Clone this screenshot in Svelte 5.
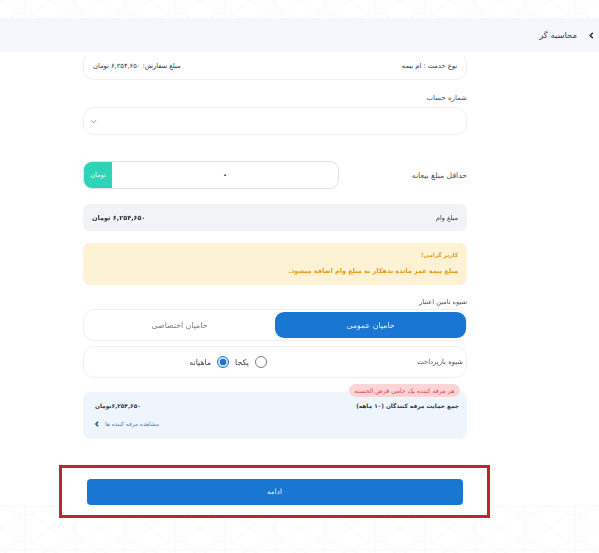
<script>
  const tabs = ['حامیان عمومی', 'حامیان اختصاصی'];
  let active = $state(0);
  let plan = $state('monthly');
</script>

<div class="page" dir="rtl">
  <svg class="pattern" aria-hidden="true" width="100%" height="100%">
    <defs>
      <pattern id="tile" width="50" height="44" patternUnits="userSpaceOnUse">
        <path d="M25 0l7 14 18 8-18 8-7 14-7-14-18-8 18-8zM18 14h14M18 30h14M25 0v44M0 22h50M0 0l18 14M50 0 32 14M0 44l18-14M50 44 32 30" fill="none" stroke="#f8f8fa" stroke-width="1"/>
      </pattern>
    </defs>
    <rect width="100%" height="100%" fill="url(#tile)"/>
  </svg>

  <header class="topbar">
    <svg class="back" viewBox="0 0 8 8" width="7" height="7"><path d="M5.5 1 2.5 4l3 3" fill="none" stroke="#2a3140" stroke-width="1.7"/></svg>
    <span>محاسبه گر</span>
  </header>

  <main class="sheet">
    <section class="column">
      <div class="card summary">
        <span>نوع خدمت : ام بیمه</span>
        <span>مبلغ سفارش: ۶,۲۵۴,۶۵۰ تومان</span>
      </div>

      <label class="label account-label" for="account">شماره حساب</label>
      <div class="card select" id="account">
        <svg viewBox="0 0 8 6" width="7" height="5"><path d="M1 1.5 4 4.5l3-3" fill="none" stroke="#7b8494" stroke-width="1"/></svg>
      </div>

      <div class="deposit">
        <span class="deposit-label">حداقل مبلغ بیعانه</span>
        <div class="amount">
          <span class="amount-value">۰</span>
          <span class="addon">تومان</span>
        </div>
      </div>

      <div class="loan">
        <span>مبلغ وام</span>
        <strong>۶,۲۵۴,۶۵۰ تومان</strong>
      </div>

      <div class="alert">
        <p class="alert-title">کاربر گرامی!</p>
        <p>مبلغ بیمه عمر مانده بدهکار به مبلغ وام اضافه میشود.</p>
      </div>

      <div class="label tabs-label">شیوه تامین اعتبار</div>
      <div class="tabs">
        {#each tabs as tab, i}
          <button class="tab" class:on={active === i} onclick={() => (active = i)}>{tab}</button>
        {/each}
      </div>

      <div class="card repay">
        <span class="repay-label">شیوه بازپرداخت</span>
        <div class="radios">
          <button class="radio" onclick={() => (plan = 'once')}>
            <span class="dot" class:checked={plan === 'once'}></span>
            <span>یکجا</span>
          </button>
          <button class="radio" onclick={() => (plan = 'monthly')}>
            <span class="dot" class:checked={plan === 'monthly'}></span>
            <span>ماهیانه</span>
          </button>
        </div>
      </div>

      <div class="support">
        <span class="pill">هر مرفه کننده یک حامی قرض الحسنه</span>
        <div class="support-row">
          <strong>جمع حمایت مرفه کنندگان (۱۰ ماهه)</strong>
          <strong>۶,۲۵۴,۶۵۰تومان</strong>
        </div>
        <a class="more" href="#more">
          <span>مشاهده مرفه کننده ها</span>
          <svg viewBox="0 0 8 8" width="6" height="6"><path d="M5.5 1 2.5 4l3 3" fill="none" stroke="#1b4f8a" stroke-width="2"/></svg>
        </a>
      </div>
    </section>

    <div class="cta-frame">
      <button class="cta">ادامه</button>
    </div>
  </main>
</div>

<style>
  :global(body) {
    margin: 0;
    background: #fff;
  }
  .page {
    position: relative;
    width: 599px;
    height: 553px;
    overflow: hidden;
    font-family: "DejaVu Sans", "Noto Sans", sans-serif;
    color: #2f3542;
    font-size: 6.5px;
    filter: blur(0.4px);
    opacity: 0.999;
    will-change: opacity;
  }
  .pattern {
    position: absolute;
    inset: 0;
  }
  .topbar {
    position: relative;
    margin-top: 18px;
    height: 34px;
    box-sizing: border-box;
    background: #f5f7fd;
    display: flex;
    align-items: center;
    gap: 11px;
    padding-right: 4px;
    font-size: 8.4px;
    color: #39404e;
  }
  .sheet {
    position: relative;
    height: 453px;
    background: #fff;
    display: flex;
    flex-direction: column;
    align-items: flex-start;
  }
  .column {
    flex-shrink: 0;
    width: 384px;
    display: flex;
    flex-direction: column;
    margin-right: 132px;
  }
  .card {
    box-sizing: border-box;
    border: 1px solid #f0f1f4;
    border-radius: 11px;
    background: #fff;
    display: flex;
    align-items: center;
    justify-content: space-between;
  }
  .summary {
    height: 28px;
    padding: 0 9px;
    font-size: 6.7px;
    border-top-color: transparent;
  }
  .label {
    font-size: 7px;
    color: #4a5160;
  }
  .account-label {
    margin-top: 13px;
    height: 14px;
    line-height: 11px;
  }
  .select {
    height: 28px;
    justify-content: flex-end;
    padding-left: 6px;
  }
  .deposit {
    margin-top: 26px;
    height: 28px;
    display: flex;
    align-items: center;
    justify-content: space-between;
  }
  .deposit-label {
    font-size: 7.7px;
    color: #4a5160;
  }
  .amount {
    width: 256px;
    height: 28px;
    box-sizing: border-box;
    border: 1px solid #e0e2e8;
    border-radius: 9px;
    display: flex;
    overflow: hidden;
    background: #fff;
  }
  .amount-value {
    flex: 1;
    text-align: center;
    line-height: 26px;
    font-size: 9px;
    font-weight: 700;
  }
  .addon {
    width: 28px;
    background: #2fd3b5;
    color: #e8fbf6;
    font-size: 6.5px;
    text-align: center;
    line-height: 26px;
  }
  .loan {
    margin-top: 15px;
    height: 27px;
    background: #f1f3f7;
    border-radius: 7px;
    display: flex;
    align-items: center;
    justify-content: space-between;
    padding: 0 9px;
    font-size: 6.5px;
  }
  .alert {
    margin-top: 12px;
    height: 42px;
    box-sizing: border-box;
    background: #fdf3d4;
    border-radius: 7px;
    padding: 4px 9px 0;
    color: #e8960f;
    font-size: 6.45px;
    font-weight: 700;
  }
  .alert p {
    margin: 0;
    line-height: 16px;
  }
  .alert-title {
    font-size: 5.7px;
  }
  .tabs-label {
    margin-top: 11px;
    height: 13px;
    line-height: 13px;
    font-size: 6.6px;
  }
  .tabs {
    box-sizing: border-box;
    height: 32px;
    border: 1px solid #eceef2;
    border-radius: 11px;
    display: flex;
    padding: 2px 0;
    background: #fff;
  }
  .tab {
    flex: 1;
    border: 0;
    background: none;
    font: inherit;
    font-size: 7.8px;
    color: #777e8b;
    border-radius: 9px;
    padding: 0;
  }
  .tab.on {
    background: #1976d2;
    color: #e8f2fb;
  }
  .repay {
    margin-top: 5px;
    height: 32px;
    padding: 0 3px;
    justify-content: flex-start;
  }
  .repay-label {
    width: 196px;
    font-size: 6.8px;
    color: #4a5160;
  }
  .radios {
    display: flex;
    gap: 6px;
  }
  .radio {
    border: 0;
    background: none;
    padding: 0;
    font: inherit;
    color: #3a4150;
    font-size: 7.8px;
    display: flex;
    align-items: center;
    gap: 6px;
  }
  .dot {
    box-sizing: border-box;
    width: 12px;
    height: 12px;
    border-radius: 50%;
    border: 1px solid #777d88;
    background: #fff;
  }
  .dot.checked {
    border-color: #1976d2;
    background: radial-gradient(circle, #1976d2 0 3px, #cfe2f5 3.6px);
  }
  .support {
    position: relative;
    margin-top: 14px;
    height: 47px;
    box-sizing: border-box;
    background: #eef5fd;
    border-radius: 7px;
    padding: 8px 8px 0 9px;
  }
  .pill {
    position: absolute;
    top: -8px;
    right: 7px;
    width: 111px;
    height: 13px;
    border-radius: 7px;
    background: #fbd5d5;
    color: #e0484d;
    font-size: 6.3px;
    line-height: 13px;
    text-align: center;
    white-space: nowrap;
  }
  .support-row {
    display: flex;
    justify-content: space-between;
    padding-left: 3px;
    font-size: 5.8px;
    line-height: 12px;
  }
  .more {
    margin-top: 9px;
    display: flex;
    align-items: center;
    justify-content: flex-end;
    gap: 5px;
    padding-left: 2px;
    color: #5a7ea6;
    font-size: 5.8px;
    text-decoration: none;
  }
  .cta-frame {
    flex-shrink: 0;
    box-sizing: border-box;
    width: 431px;
    height: 53px;
    margin-top: 26px;
    margin-right: 109px;
    border: 3px solid #c0242f;
    display: flex;
    align-items: center;
    justify-content: center;
    background: #fff;
  }
  .cta {
    width: 376px;
    height: 26px;
    border: 0;
    border-radius: 4px;
    background: #1976d2;
    color: #e8f2fb;
    font: inherit;
    font-size: 7.3px;
  }
</style>
